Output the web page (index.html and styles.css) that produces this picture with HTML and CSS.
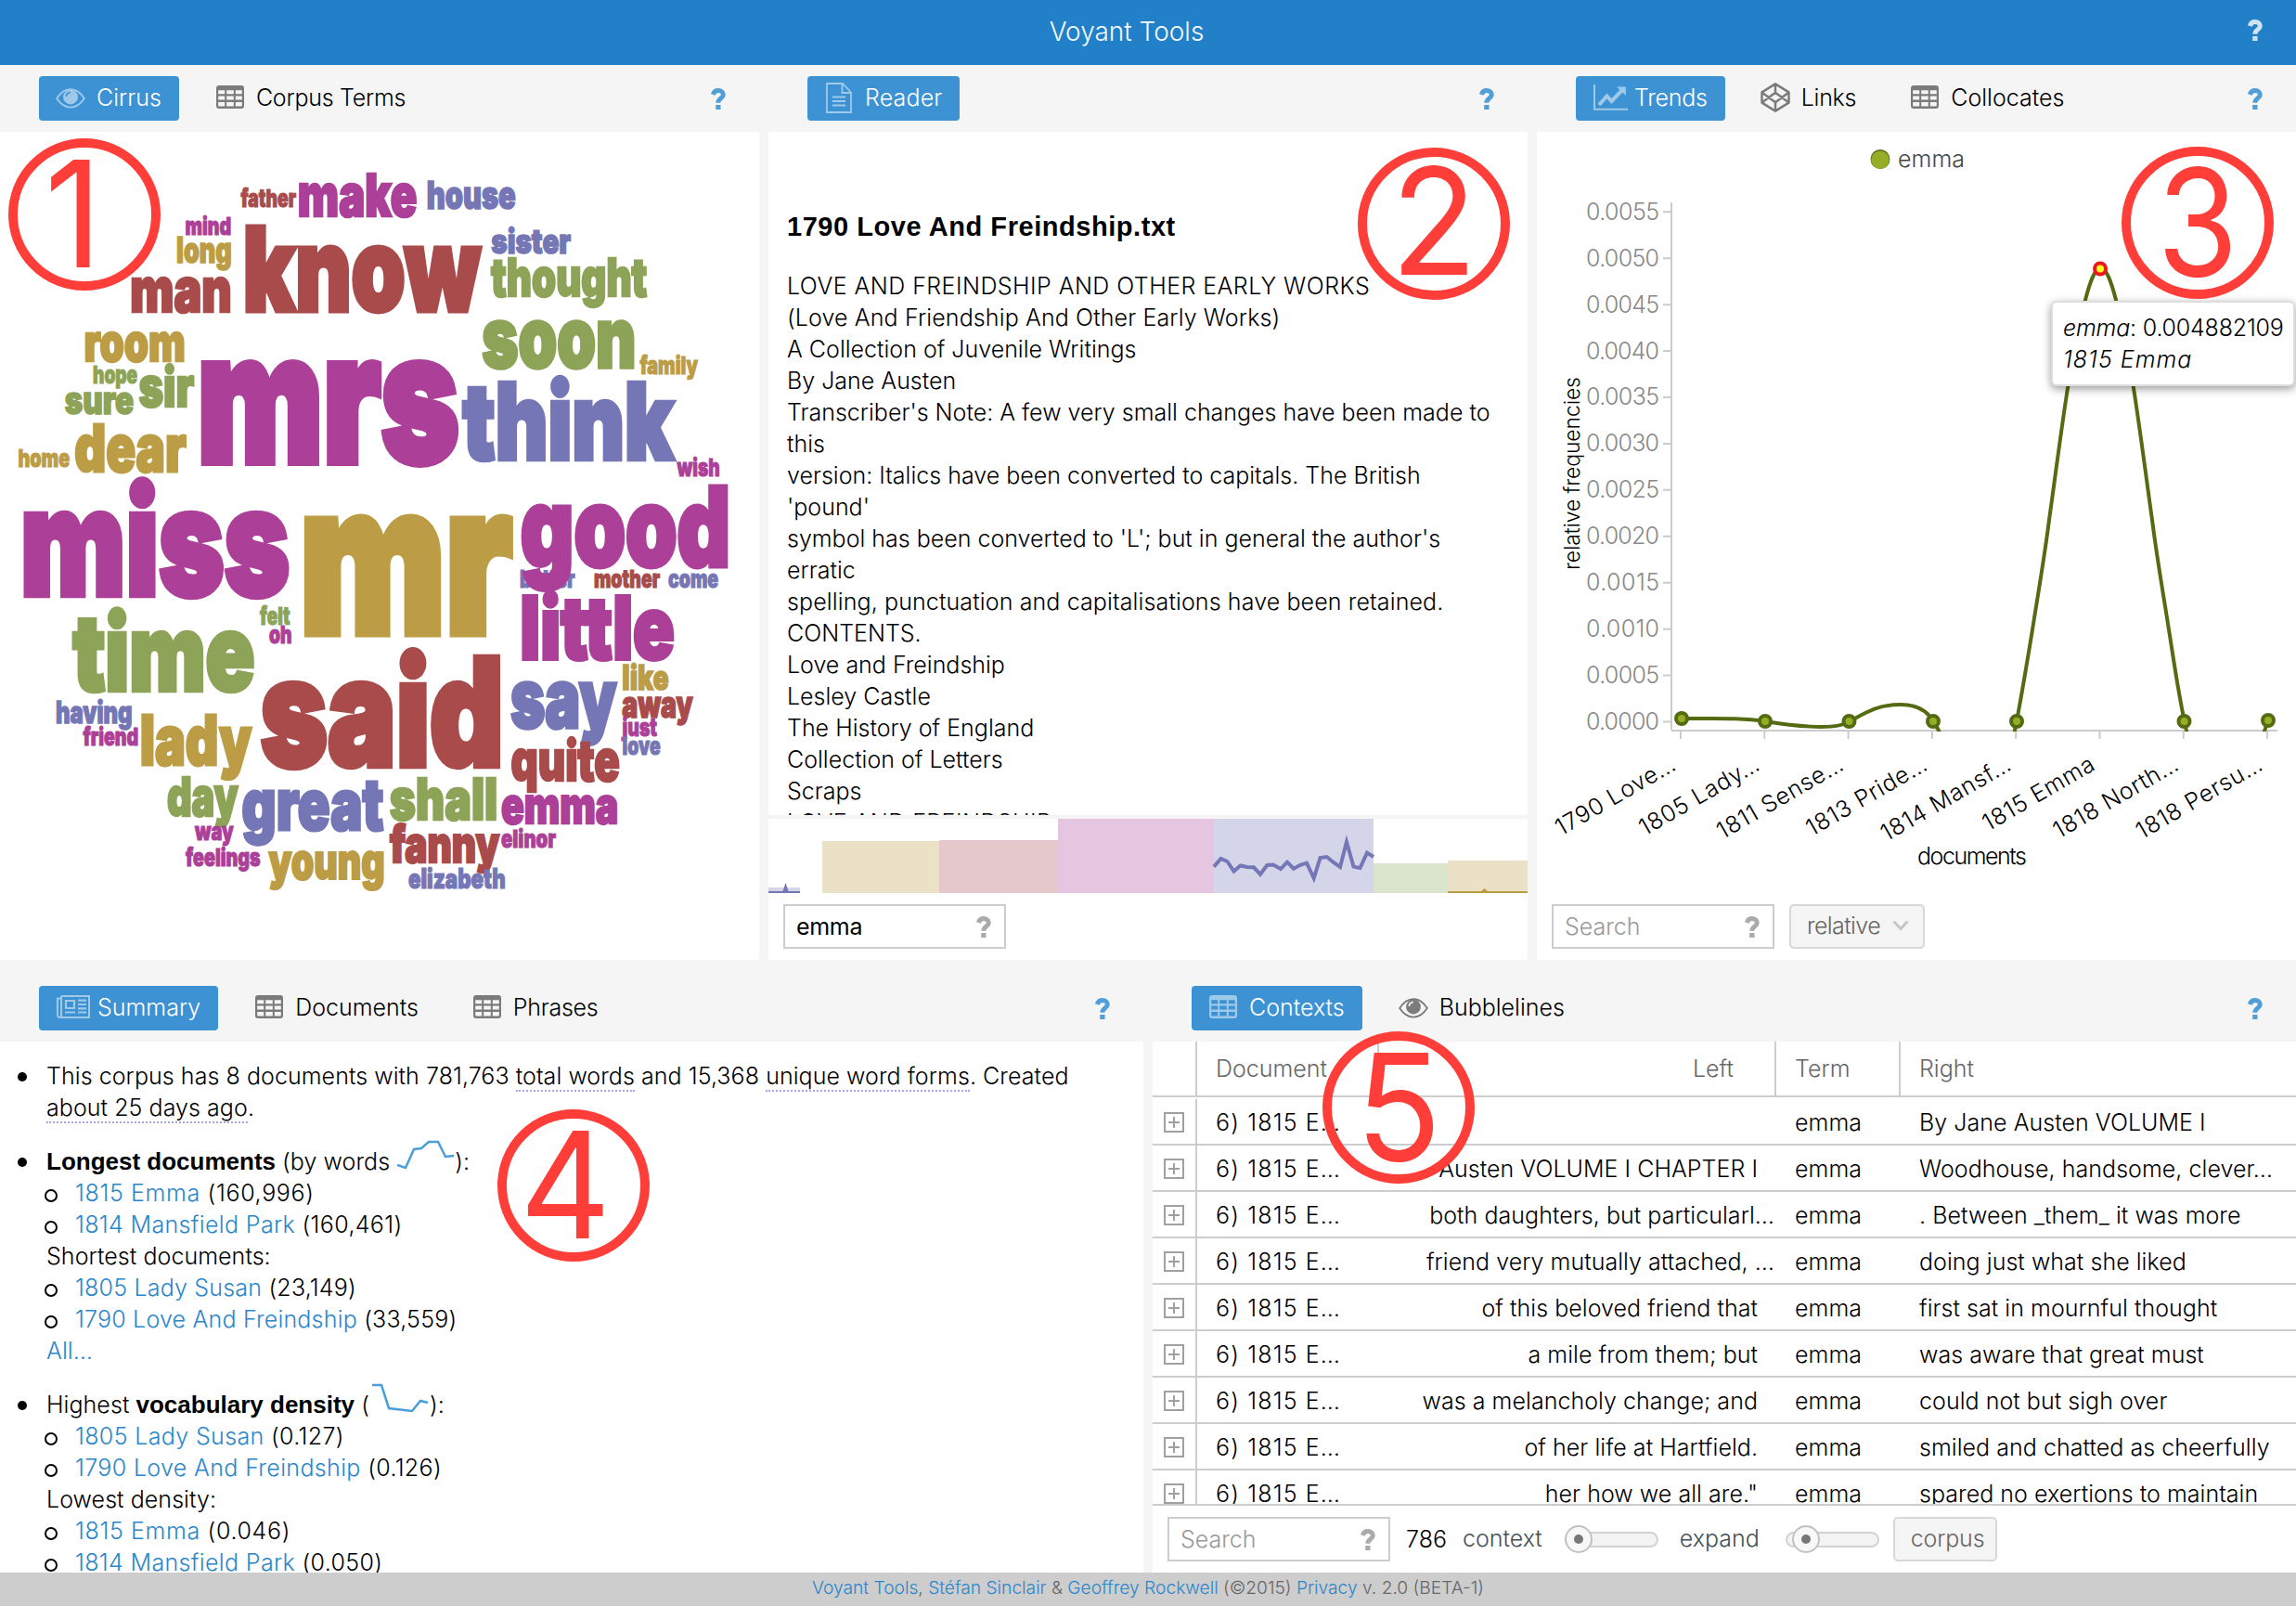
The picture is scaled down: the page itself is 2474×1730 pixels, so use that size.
FILE: index.html
```html
<!DOCTYPE html>
<html lang="en">
<head>
<meta charset="utf-8">
<title>Voyant Tools</title>
<link rel="stylesheet" href="styles.css">
</head>
<body>
<svg class="defs" width="0" height="0" aria-hidden="true">
  <symbol id="i-help" viewBox="0 0 16 23"><path d="M2.3 7C3.2 3.8 5 2.6 7.9 2.6c3.3 0 5.4 1.8 5.4 4.4 0 3.9-5.5 4-5.5 8.8" fill="none" stroke="currentColor" stroke-width="5"/><rect x="5.2" y="18" width="5.3" height="5" fill="currentColor"/></symbol>
  <symbol id="i-table" viewBox="0 0 30 25"><path fill="currentColor" fill-rule="evenodd" d="M3 0h24a3 3 0 0 1 3 3v19a3 3 0 0 1-3 3H3a3 3 0 0 1-3-3V3a3 3 0 0 1 3-3zM2.2 5.2v4h7v-4zm9 0v4h7.6v-4zm9.600 0v4h7v-4zM2.200 11.500v4h7v-4zm9 0v4h7.600v-4zm9.600 0v4h7v-4zM2.200 18v3.500q0 1 1 1h6V18zm9 0v4.500h7.600V18zm9.600 0v4.500h6q1 0 1-1V18z"/></symbol>
  <symbol id="i-eye" viewBox="0 0 32 22"><path d="M1.200 11Q7.500 1.200 16 1.200T30.800 11Q24.500 20.600 16 20.600T1.200 11z" fill="none" stroke="currentColor" stroke-width="1.900"/><circle cx="16" cy="9.500" r="7.900" fill="currentColor"/><path d="M11.300 9q.300-4 4.500-4.700" fill="none" stroke="var(--hole)" stroke-width="1.700"/></symbol>
  <symbol id="i-file" viewBox="0 0 28 33"><path d="M1 1h17l9 9.500V32H1zM17.500 1v10H27M7 15.500h14M7 20h14M7 24.500h14" fill="none" stroke="currentColor" stroke-width="1.800"/></symbol>
  <symbol id="i-line" viewBox="0 0 37 28"><path d="M1 0v26.700h36" fill="none" stroke="currentColor" stroke-width="2"/><path d="M6 22l8.500-9.500 5 5.500L31 6" fill="none" stroke="currentColor" stroke-width="4"/><path d="M25 2.500h9.800V12z" fill="currentColor"/></symbol>
  <symbol id="i-links" viewBox="0 0 32 32"><path d="M16 1.400l14.500 9v11.200l-14.500 9-14.500-9V10.400zM16 1.400v9.300M16 21.300v9.300M1.500 10.400L16 21.300l14.500-10.900M1.500 21.600L16 10.700l14.500 10.900" fill="none" stroke="currentColor" stroke-width="2.500" stroke-linejoin="round"/></symbol>
  <symbol id="i-news" viewBox="0 0 36 25"><path d="M5 1h30v23H3.500Q1 24 1 21.500V3.500h4M5 1v20.500Q5 24 3 24" fill="none" stroke="currentColor" stroke-width="2"/><path d="M10 6h9v8h-9zM9 18.500h11M23 5.700h9M23 10h9M23 14.300h9M23 18.500h9" fill="none" stroke="currentColor" stroke-width="2.200"/></symbol>
</svg>

<header class="app-bar">
  <h1>Voyant Tools</h1>
  <svg class="help"><use href="#i-help"/></svg>
</header>

<main class="workspace">
  <div class="row row-top">
    <section class="panel">
      <nav class="tabs">
        <a class="tab active"><svg class="ico eye"><use href="#i-eye"/></svg><span class="wide">Cirrus</span></a>
        <a class="tab"><svg class="ico table"><use href="#i-table"/></svg><span>Corpus Terms</span></a>
        <svg class="help"><use href="#i-help"/></svg>
      </nav>
      <div class="body">
        <svg class="cloud" viewBox="0 142 818 892" id="cloud"></svg>
      </div>
    </section>

    <section class="panel">
      <nav class="tabs">
        <a class="tab active"><svg class="ico file"><use href="#i-file"/></svg><span class="wider">Reader</span></a>
        <svg class="help"><use href="#i-help"/></svg>
      </nav>
      <div class="body">
        <article class="reader">
          <h2>1790 Love And Freindship.txt</h2>
          <p><span class="caps">LOVE AND FREINDSHIP AND OTHER EARLY WORKS</span><br>
          <span class="loose">(Love And Friendship And Other Early Works)</span><br>
          A Collection of Juvenile Writings<br>
          By Jane Austen<br>
          Transcriber's Note: A few very small changes have been made to<br>this<br>
          version: Italics have been converted to capitals. The British<br>'pound'<br>
          symbol has been converted to 'L'; but in general the author's<br>erratic<br>
          <span class="loose">spelling, punctuation and capitalisations have been retained.</span><br>
          CONTENTS.<br>
          Love and Freindship<br>
          Lesley Castle<br>
          The History of England<br>
          Collection of Letters<br>
          Scraps<br>
          <span class="caps">LOVE AND FREINDSHIP</span></p>
        </article>
        <svg class="docbars" viewBox="828 882 818 80">
          <path fill="#d5d5e9" d="M828 956h34v6h-34zM1308 882h172v80h-172z"/>
          <path fill="#ebe1c7" d="M886 906h126v56H886zM1560 927h86v35h-86z"/>
          <path fill="#e5c8cb" d="M1012 905h128v57h-128z"/>
          <path fill="#e6c5e0" d="M1140 882h168v80h-168z"/>
          <path fill="#dbe4cd" d="M1480 930h80v32h-80z"/>
          <path fill="#7576b5" d="M828 960h15.500l3-9 3 9H862v2h-34z"/>
          <path fill="#bc9c45" d="M1560 960h36l3.500-3 3.500 3h43v2h-86z"/>
          <polyline fill="none" stroke="#7576b5" stroke-width="4" points="1308,933.600 1315.500,925 1322.500,928 1329.500,938.500 1336.500,932.500 1344,934 1351,934.300 1358,941.800 1365.300,932 1372,931.500 1380,936 1387,928.600 1394,935.700 1401,931.800 1408,929.600 1415.700,946 1422.600,924 1429.600,923 1437,929 1444,934 1451,907 1458.500,933.600 1465.500,935 1473,918.600 1480,923"/>
        </svg>
        <div class="toolbar">
          <div class="field filled"><span>emma</span><svg class="help"><use href="#i-help"/></svg></div>
        </div>
      </div>
    </section>

    <section class="panel">
      <nav class="tabs">
        <a class="tab active"><svg class="ico line"><use href="#i-line"/></svg><span>Trends</span></a>
        <a class="tab"><svg class="ico links"><use href="#i-links"/></svg><span>Links</span></a>
        <a class="tab"><svg class="ico table"><use href="#i-table"/></svg><span class="wide">Collocates</span></a>
        <svg class="help"><use href="#i-help"/></svg>
      </nav>
      <div class="body">
        <svg class="chart" viewBox="1656 142 818 820" id="chart">
          <circle cx="2026" cy="171.500" r="10.500" fill="#556b12"/>
          <circle cx="2026" cy="172.300" r="9.800" fill="#94ae26"/>
          <text x="2045" y="180" fill="#444" textLength="72">emma</text>
          <path d="M1801 218v568M1801 787h653" stroke="#ccc" stroke-width="2" fill="none"/>
          <g id="axes"></g>
          <text class="axis-title" transform="translate(1702 614) rotate(-90)" textLength="208">relative frequencies</text>
          <text x="2066" y="931" textLength="118">documents</text>
          <clipPath id="plot"><rect x="1802" y="200" width="672" height="588"/></clipPath>
          <path clip-path="url(#plot)" fill="none" stroke="#556b12" stroke-width="4" d="M1812 774C1850 774 1878 773 1902 777S1978 788 1993 777C2010 768 2023 759 2048 759C2068 759 2078 768 2083 777C2088 784 2090 788 2093 796M2169 796C2176 765 2184 715 2191 672C2196 640 2203 600 2208 560C2213 525 2222 455 2228.500 415C2233 385 2240 345 2247 323C2252 304 2257 289 2263.500 289C2270 289 2275 304 2280 323C2287 345 2294 385 2298.500 415C2305 455 2314 525 2319 560C2324 600 2331 640 2336 672C2343 715 2348 755 2358 796M2437 796L2444 776"/>
          <g fill="#94ae26" stroke="#556b12" stroke-width="4">
            <circle cx="1812" cy="774" r="6"/><circle cx="1902" cy="777" r="6"/><circle cx="1992.500" cy="777" r="6"/><circle cx="2083" cy="777" r="6"/><circle cx="2173" cy="777" r="6"/><circle cx="2353.500" cy="777" r="6"/><circle cx="2444" cy="776" r="6"/>
          </g>
          <circle cx="2263" cy="289.500" r="6" fill="#ff2" stroke="#f0151c" stroke-width="4"/>
        </svg>
        <div class="tooltip"><i>emma</i>: 0.004882109<br><i class="name">1815 Emma</i></div>
        <div class="toolbar">
          <div class="field"><span>Search</span><svg class="help"><use href="#i-help"/></svg></div>
          <div class="btn select"><span>relative</span><svg width="18" height="12" viewBox="0 0 18 12"><path d="M1.500 1.500L9 9.500l7.500-8" fill="none" stroke="#c6c6c6" stroke-width="3"/></svg></div>
        </div>
      </div>
    </section>
  </div>

  <div class="row row-bottom">
    <section class="panel">
      <nav class="tabs">
        <a class="tab active"><svg class="ico news"><use href="#i-news"/></svg><span class="wide">Summary</span></a>
        <a class="tab"><svg class="ico table"><use href="#i-table"/></svg><span class="wide">Documents</span></a>
        <a class="tab"><svg class="ico table"><use href="#i-table"/></svg><span>Phrases</span></a>
        <svg class="help"><use href="#i-help"/></svg>
      </nav>
      <div class="body">
        <ul class="summary">
          <li>This corpus has 8 documents with 781,763 <u>total words</u> and 15,368 <u>unique word forms</u>. Created<br><u>about 25 days ago</u>.</li>
          <li><b>Longest documents</b> (by words <svg class="spark" viewBox="0 0 62 32"><polyline points="0,27 9,30 18,10 26,9 34,2 44,2 52,18 61,17"/></svg>):
            <ul><li class="short"><a>1815 Emma</a> (160,996)</li><li><a>1814 Mansfield Park</a> (160,461)</li></ul>
            Shortest documents:
            <ul><li class="long"><a>1805 Lady Susan</a> (23,149)</li><li class="long"><a>1790 Love And Freindship</a> (33,559)</li></ul>
            <a>All…</a></li>
          <li>Highest <b>vocabulary density</b> (<svg class="spark gap" viewBox="0 0 62 32"><polyline points="0,2 10,2 18,27 43,30 52,19 60,21"/></svg>):
            <ul><li><a>1805 Lady Susan</a> (0.127)</li><li><a>1790 Love And Freindship</a> (0.126)</li></ul>
            Lowest density:
            <ul><li class="short"><a>1815 Emma</a> (0.046)</li><li><a>1814 Mansfield Park</a> (0.050)</li></ul></li>
        </ul>
      </div>
    </section>

    <section class="panel">
      <nav class="tabs">
        <a class="tab active"><svg class="ico table"><use href="#i-table"/></svg><span class="wide">Contexts</span></a>
        <a class="tab"><svg class="ico eye"><use href="#i-eye"/></svg><span class="wide">Bubblelines</span></a>
        <svg class="help"><use href="#i-help"/></svg>
      </nav>
      <div class="body">
        <div class="grid-head"><span></span><span>Document</span><span class="left">Left</span><span>Term</span><span>Right</span></div>
        <div class="grid-rows" id="rows"></div>
        <div class="toolbar">
          <div class="field"><span>Search</span><svg class="help"><use href="#i-help"/></svg></div>
          <span class="count">786</span>
          <span class="label">context</span>
          <svg class="slider" viewBox="0 0 102 32"><rect x="1" y="9" width="99" height="15" rx="7.500"/><circle class="thumb" cx="15" cy="16" r="14"/><circle class="dot" cx="15" cy="16" r="5"/></svg>
          <span class="label">expand</span>
          <svg class="slider second" viewBox="0 0 102 32"><rect x="1" y="9" width="99" height="15" rx="7.500"/><circle class="thumb" cx="22" cy="16" r="14"/><circle class="dot" cx="22" cy="16" r="5"/></svg>
          <div class="btn">corpus</div>
        </div>
      </div>
    </section>
  </div>
</main>

<footer class="foot"><p><a>Voyant Tools</a>, <a>Stéfan Sinclair</a> &amp; <a>Geoffrey Rockwell</a> (©2015) <a>Privacy</a> v. 2.0 (BETA-1)</p></footer>

<div class="mark m1"><span>1</span></div>
<div class="mark m2"><span>2</span></div>
<div class="mark m3"><span>3</span></div>
<div class="mark m4"><span>4</span></div>
<div class="mark m5"><span>5</span></div>

<script src="app.js"></script>
</body>
</html>
```
FILE: styles.css
```css
* { box-sizing: border-box; }

body {
  margin: 0;
  width: 2474px;
  height: 1730px;
  overflow: hidden;
  position: relative;
  display: flex;
  flex-direction: column;
  background: #f5f5f5;
  color: #000;
  font: 300 25px/34px Inter, "Liberation Sans", sans-serif;
}

.defs { position: absolute; }

a { color: #2b86cb; }

.help { width: 16px; height: 23px; color: #519fd8; }

/* Top bar */
.app-bar {
  flex: none;
  height: 70px;
  background: #2180c8;
  display: flex;
  align-items: center;
  position: relative;
}
.app-bar h1 {
  margin: 0;
  flex: 1;
  padding-right: 46px;
  padding-bottom: 2px;
  text-align: center;
  font-size: 28px;
  font-weight: 300;
  color: #f4f9fd;
}
.app-bar .help { position: absolute; right: 36px; top: 21px; color: #cfe3f3; }

/* Panels */
.workspace { flex: 1; display: flex; flex-direction: column; gap: 16px; min-height: 0; }
.row { display: grid; column-gap: 10px; }
.row-top { grid-template-columns: 818px 818px 818px; height: 964px; }
.row-bottom { grid-template-columns: 1232px 1232px; height: 644px; }
.panel { display: flex; flex-direction: column; min-width: 0; min-height: 0; }
.body { flex: 1; min-height: 0; background: #fff; display: flex; flex-direction: column; position: relative; overflow: hidden; }

.tabs { flex: none; height: 72px; padding: 0 36px 0 42px; display: flex; align-items: center; gap: 21px; }
.tabs .help { margin-left: auto; }
.tab {
  --hole: #f5f5f5;
  height: 48px;
  padding: 0 19px 2px 18px;
  border-radius: 4px;
  display: flex;
  align-items: center;
  color: #000;
  letter-spacing: -0.25px;
}
.tab .wide { letter-spacing: 0; }
.tab .wider { letter-spacing: 0.15px; }
.tab.active { --hole: #3d92d3; background: #3d92d3; color: #fff; }
.ico { flex: none; color: #7b7b7b; }
.active .ico { color: #9fc9e9; }
.ico.table { width: 30px; height: 25px; margin: 0 13px 1px 1px; }
.ico.eye { width: 32px; height: 22px; margin: 2px 12px 0 0; }
.ico.file { width: 28px; height: 33px; margin: 0 14px 0 2px; }
.ico.line { width: 37px; height: 28px; margin: 0 7px 0 1px; }
.ico.links { width: 32px; height: 32px; margin: 0 12px 1px -1px; }
.ico.news { width: 36px; height: 25px; margin: 0 8px 1px 1px; }

/* Word cloud */
.cloud { width: 818px; height: 892px; }
.cloud text { font-family: Inter, "Liberation Sans", sans-serif; font-weight: 900; }

/* Reader */
.reader { height: 736px; overflow: hidden; padding: 84px 20px 0; }
.reader h2 { margin: 0; font: 700 29px/36px "Liberation Sans", sans-serif; letter-spacing: 0.55px; white-space: nowrap; }
.reader p { margin: 29px 0 0; white-space: nowrap; }
.caps { letter-spacing: 0.45px; }
.loose { letter-spacing: 0.12px; }
.docbars { width: 818px; height: 84px; border-top: 4px solid #f5f5f5; }

/* Toolbars */
.toolbar { height: 72px; padding: 0 16px; display: flex; align-items: center; }
.field {
  width: 240px;
  height: 48px;
  border: 2px solid #cdcdcd;
  padding: 0 14px 0 12px;
  display: flex;
  align-items: center;
  justify-content: space-between;
  background: #fff;
  color: #999;
}
.field .help { color: #aaa; }
.field.filled span { color: #000; font-weight: 400; letter-spacing: -0.3px; }
.btn {
  height: 48px;
  border: 2px solid #d8d8d8;
  border-radius: 5px;
  background: #f5f5f5;
  color: #666;
  padding: 0 17px 2px;
  display: flex;
  align-items: center;
}
.btn.select { width: 146px; margin-left: 16px; padding: 0 15px 2px 17px; justify-content: space-between; letter-spacing: -0.6px; }

/* Trends chart */
.chart { width: 818px; height: 820px; }
.chart text { font-size: 25px; }
.chart .tick { fill: #888; }
.chart .doc { letter-spacing: 0.7px; }
.chart .axis-title { font-size: 23px; }
.tooltip {
  position: absolute;
  left: 554px;
  top: 182px;
  width: 263px;
  height: 92px;
  padding: 10px 0 0 11px;
  border: 2px solid #ddd;
  border-radius: 6px;
  background: #fff;
  box-shadow: 0 3px 10px rgba(0, 0, 0, 0.4);
  white-space: nowrap;
  letter-spacing: -0.2px;
}
.tooltip .name { letter-spacing: 1px; }

/* Summary */
.summary { margin: 0; padding: 20px 0 0 50px; list-style: none; letter-spacing: 0.06px; }
.summary > li { margin-bottom: 24px; position: relative; }
.summary > li::before { content: ""; position: absolute; left: -31px; top: 13px; width: 10px; height: 10px; border-radius: 50%; background: #000; }
.summary ul { margin: 0; padding: 0 0 0 31px; list-style: none; letter-spacing: 0.36px; }
.summary ul .long { letter-spacing: 0.2px; }
.summary ul .short { letter-spacing: 0.65px; }
.summary ul li { position: relative; }
.summary ul li::before { content: ""; position: absolute; left: -33px; top: 13px; width: 10px; height: 10px; border-radius: 50%; border: 2px solid #000; }
.summary b { font: 700 26px/34px "Liberation Sans", sans-serif; letter-spacing: 0; }
.summary u { text-decoration: none; border-bottom: 2px dotted #a5a5ee; }
.spark { width: 62px; height: 32px; vertical-align: 0; margin: -8px 0 0 1px; }
.spark.gap { margin-left: 3px; }
.spark polyline { fill: none; stroke: #4a9fdb; stroke-width: 2.5; }

/* Contexts grid */
.grid-head, .grid-row { display: grid; grid-template-columns: 48px 196px 428px 134px 1fr; }
.grid-head { height: 60px; border-bottom: 2px solid #cdcdcd; color: #666; line-height: 56px; }
.grid-head span { padding-left: 20px; border-right: 2px solid #cdcdcd; padding-top: 1px; }
.grid-head span:last-child { border-right: 0; }
.grid-head .left { text-align: right; padding-right: 44px; }
.grid-rows { height: 438px; padding-top: 2px; overflow: hidden; letter-spacing: 0.04px; }
.grid-row { height: 50px; border-bottom: 2px solid #cdcdcd; line-height: 46px; white-space: nowrap; }
.grid-row span { padding: 2px 0 0 20px; }
.grid-row .doc { letter-spacing: 1.15px; }
.grid-row .left { text-align: right; padding: 2px 20px 0 0; }
.grid-row .left.cut { padding-right: 2px; }
.grid-row .exp { padding: 14px 0 0 12px; border-right: 2px solid #cdcdcd; line-height: 0; }
.body .grid-rows + .toolbar { height: 74px; border-top: 2px solid #cdcdcd; color: #444f58; }
.count { margin-left: 17px; width: 61px; color: #000; }
.label { margin-right: 24px; letter-spacing: 0; padding-bottom: 2px; }
.slider { width: 102px; height: 32px; margin-right: 22px; }
.slider.second { margin-left: 4px; }
.slider + .btn { margin-left: -8px; width: 112px; letter-spacing: -0.2px; }
.slider rect { fill: #f3f3f3; stroke: #d2d2d2; stroke-width: 2; }
.slider .thumb { fill: #f8f8f8; stroke: #c2c2c2; stroke-width: 2; }
.slider .dot { fill: #777; }

/* Footer */
.foot { flex: none; height: 36px; background: #cdcdcd; text-align: center; color: #666; font-size: 19.2px; line-height: 33px; }
.foot p { margin: 0; }

/* Numbered callouts over the panels */
.mark {
  position: absolute;
  width: 164px;
  height: 164px;
  border: 10px solid #ff3e39;
  border-radius: 50%;
  color: #ff3e39;
  font-size: 160px;
  line-height: 142px;
  text-align: center;
  font-weight: 400;
}
.mark span { display: block; transform: scaleX(0.95); }
.m1 { left: 9px; top: 149px; }
.m1 span { transform: translateX(-12px) scaleX(0.95); }
.m2 { left: 1463px; top: 159px; }
.m2 span { transform: translateY(-2px) scaleX(0.95); }
.m3 { left: 2286px; top: 158px; }
.m3 span { transform: scaleX(0.88); }
.m4 { left: 536px; top: 1195px; }
.m4 span { transform: translateX(-9px) scaleX(0.95); }
.m5 { left: 1425px; top: 1111px; }
```
FILE: app.js
```js
const SVG = 'http://www.w3.org/2000/svg';
const red = '#a94b4b', purple = '#ac3f97', blue = '#7576b5', gold = '#bc9c45', green = '#8da357';

// term, left, baseline, width, size, colour
const terms = [
  ['father', 260, 224, 59, 24, red], ['make', 322, 234, 127, 58, purple], ['house', 460.5, 226, 95, 38, blue],
  ['mind', 200, 254, 49, 24, purple], ['long', 190.6, 284, 59, 35, gold], ['man', 141.5, 337.5, 108, 61, red],
  ['know', 264, 337.5, 253, 115, red], ['sister', 530, 273.5, 85, 34, blue], ['thought', 530, 320, 167, 52, green],
  ['room', 91.5, 390, 108, 51, gold], ['soon', 521, 397.5, 164, 83, green], ['family', 690, 404, 62, 24, gold],
  ['hope', 100.5, 414, 47.5, 24, green], ['sure', 70.5, 447, 73.5, 38, green], ['sir', 150.5, 439.5, 58.5, 54, green],
  ['mrs', 216, 502, 278, 178, purple], ['think', 500.5, 497, 225, 105, blue], ['dear', 81.5, 509.5, 119, 64, gold],
  ['home', 20, 503.5, 55, 24, gold], ['wish', 730, 513.5, 45.5, 24, purple], ['miss', 25, 644, 286.5, 146, purple],
  ['mr', 327, 687, 224, 205, gold], ['better', 560.5, 634, 59, 24, blue], ['good', 563, 612, 223.5, 108, purple],
  ['mother', 640.5, 634, 70.5, 24, red], ['come', 720.5, 634, 53.5, 24, blue], ['little', 562, 712, 164.5, 86, purple],
  ['felt', 280.5, 674, 32, 24, green], ['oh', 290.5, 693.5, 24, 24, purple], ['time', 80.5, 746, 193.5, 104, green],
  ['said', 283.5, 828, 258.5, 147, red], ['say', 551.5, 786, 112.5, 81, blue], ['like', 671, 744, 49.5, 34, gold],
  ['away', 671, 774, 75.5, 36, red], ['just', 671, 794, 37, 24, purple], ['love', 671, 814, 40.5, 24, blue],
  ['quite', 551.5, 842, 116, 56, red], ['having', 60.5, 780, 82, 30, blue], ['friend', 90, 804, 59, 24, purple],
  ['lady', 152, 826, 119, 68, gold], ['day', 181, 880, 75.5, 53, green], ['great', 262, 896, 151, 70, blue],
  ['shall', 421, 884, 115, 57, green], ['emma', 541, 888, 125, 50, purple], ['way', 210.5, 906, 41, 25, purple],
  ['feelings', 200.5, 934, 80, 24, purple], ['young', 290.5, 948, 124, 49, gold], ['fanny', 421, 930, 117, 50, red],
  ['elinor', 540.5, 914, 58.5, 24, purple], ['elizabeth', 440.5, 958, 104, 27, blue],
];

function addText(parent, text, attrs) {
  const el = document.createElementNS(SVG, 'text');
  for (const key in attrs) el.setAttribute(key, attrs[key]);
  el.textContent = text;
  parent.appendChild(el);
}

const cloud = document.getElementById('cloud');
for (const [word, x, y, width, size, fill] of terms) {
  const bold = size * 0.045;
  addText(cloud, word, {
    x: x - size * 0.02, y: y - bold / 2, fill, stroke: fill, 'stroke-width': bold,
    'font-size': size * 1.09, textLength: width + size * 0.025, lengthAdjust: 'spacingAndGlyphs',
  });
}

// Chart axes
const axes = document.getElementById('axes');
let ticks = '';
for (let i = 0; i <= 11; i++) {
  const y = 777.5 - i * 49.93;
  ticks += `M1792 ${y}h9`;
  addText(axes, (i * 0.0005).toFixed(4), { class: 'tick', x: 1709, y: y + 8.5, textLength: 79 });
}
['1790 Love…', '1805 Lady…', '1811 Sense…', '1813 Pride…', '1814 Mansf…', '1815 Emma', '1818 North…', '1818 Persu…'].forEach((name, i) => {
  const x = 1811 + i * 90.3;
  ticks += `M${x} 788v8`;
  addText(axes, name, { class: 'doc', transform: `translate(${x - 3} 828) rotate(-30)`, 'text-anchor': 'end' });
});
const marks = document.createElementNS(SVG, 'path');
marks.setAttribute('d', ticks);
marks.setAttribute('stroke', '#ccc');
marks.setAttribute('stroke-width', 2);
axes.appendChild(marks);

// Keyword-in-context rows: left, right, whether the left side is truncated
const contexts = [
  ['', 'By Jane Austen VOLUME I'],
  ['Austen VOLUME I CHAPTER I', 'Woodhouse, handsome, clever…'],
  ['both daughters, but particularl…', '. Between _them_ it was more', true],
  ['friend very mutually attached, …', 'doing just what she liked', true],
  ['of this beloved friend that', 'first sat in mournful thought'],
  ['a mile from them; but', 'was aware that great must'],
  ['was a melancholy change; and', 'could not but sigh over'],
  ['of her life at Hartfield.', 'smiled and chatted as cheerfully'],
  ['her how we all are."', 'spared no exertions to maintain'],
];
document.getElementById('rows').innerHTML = contexts.map(([left, right, cut]) => `
  <div class="grid-row">
    <span class="exp"><svg width="22" height="22" viewBox="0 0 22 22"><path d="M1 1h20v20H1zM11 5v12M5 11h12" fill="none" stroke="#a0a0a0" stroke-width="2"/></svg></span>
    <span class="doc">6) 1815 E…</span>
    <span class="left${cut ? ' cut' : ''}">${left}</span>
    <span>emma</span>
    <span>${right}</span>
  </div>`).join('');
```
